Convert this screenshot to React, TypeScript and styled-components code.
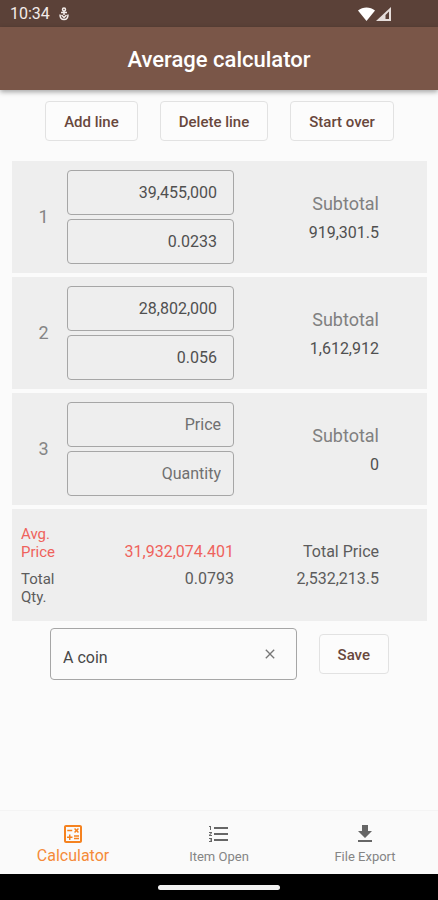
import React, { useState } from "react";
import styled, { createGlobalStyle } from "styled-components";
import { MdClose, MdFileDownload, MdFormatListNumbered, MdOutlineCalculate } from "react-icons/md";

const GlobalStyle = createGlobalStyle`
  *, *::before, *::after { box-sizing: border-box; }
  body { margin: 0; background: #fafafa; }
  body, button, input { font-family: Roboto, "Noto Sans", sans-serif; }
`;

const Page = styled.div`
  min-height: 100vh;
  display: flex;
  flex-direction: column;
  background: #fbfbfb;
  color: #555;
`;

const StatusBar = styled.div`
  height: 27px;
  padding: 0 46px 0 10px;
  display: flex;
  align-items: center;
  background: #5b4138;
  color: #f3ecea;
  font-size: 16px;
  line-height: 28px;
`;

const StatusGlyph = styled.svg`
  margin-left: 8px;
  width: 12px;
  height: 14px;
`;

const SignalGlyphs = styled.svg`
  margin-left: auto;
  width: 34px;
  height: 16px;
`;

const AppBar = styled.header`
  height: 63px;
  display: flex;
  align-items: center;
  justify-content: center;
  background: #7a5648;
  box-shadow: 0 2px 5px rgba(0, 0, 0, 0.35);
`;

const Title = styled.h1`
  margin: 0;
  padding-top: 3px;
  font-size: 22px;
  font-weight: 500;
  line-height: 28px;
  color: #fff;
`;

const Main = styled.main`
  flex: 1;
  padding: 11px 11px 0 12px;
`;

const Toolbar = styled.div`
  display: flex;
  justify-content: center;
  gap: 22px;
  margin-bottom: 20px;
`;

const OutlineButton = styled.button`
  height: 40px;
  padding: 1px 18px 0;
  border: 1px solid #e2e2e2;
  border-radius: 4px;
  background: #fcfcfc;
  color: #69483d;
  font-size: 15px;
  font-weight: 500;
  line-height: 20px;
  white-space: nowrap;
  cursor: pointer;
`;

const Lines = styled.div`
  display: grid;
  gap: 4px;
`;

const LineCard = styled.section`
  min-height: 112px;
  display: grid;
  grid-template-columns: 55px minmax(0, 167fr) minmax(0, 193fr);
  align-items: center;
  background: #eee;
`;

const LineNumber = styled.span`
  padding-left: 8px;
  text-align: center;
  font-size: 18px;
  line-height: 20px;
  color: #858585;
`;

const Fields = styled.div`
  display: grid;
  gap: 4px;
`;

const NumberField = styled.input`
  width: 100%;
  height: 45px;
  padding: 0 16px;
  border: 1px solid #a6a6a6;
  border-radius: 4px;
  background: transparent;
  color: #505050;
  font-size: 16px;
  text-align: right;
  &:placeholder-shown { padding-right: 12px; }
  &::placeholder { color: #707070; opacity: 1; }
`;

const Subtotal = styled.div`
  padding: 2px 48px 0 0;
  display: grid;
  gap: 8px;
  justify-items: end;
  color: #505050;
  font-size: 16px;
  line-height: 20px;
`;

const SubtotalLabel = styled.span`
  color: #808080;
  font-size: 18px;
  line-height: 22px;
`;

const SummaryCard = styled.section`
  min-height: 112px;
  padding: 0 0 0 9px;
  display: grid;
  grid-template-columns: 46px minmax(0, 167fr) minmax(0, 193fr);
  align-content: center;
  row-gap: 9px;
  background: #eee;
  color: #5c5c5c;
  font-size: 16px;
  line-height: 18px;
`;

const SummaryCell = styled.span<{ $accent?: boolean; $low?: boolean; $kind?: "label" | "total" }>`
  align-self: ${(p) => (p.$low ? "end" : "start")};
  text-align: ${(p) => (p.$kind === "label" ? "left" : "right")};
  padding-right: ${(p) => (p.$kind === "total" ? "48px" : "0")};
  color: ${(p) => (p.$accent ? "#ef625c" : "inherit")};
  font-size: ${(p) => (p.$kind === "label" ? "15px" : "16px")};
`;

const SaveRow = styled.form`
  margin: 7px 38px 0;
  display: flex;
  align-items: center;
  gap: 22px;
`;

const NameBox = styled.div`
  flex: 1;
  min-width: 0;
  height: 52px;
  display: flex;
  align-items: center;
  border: 1px solid #a6a6a6;
  border-radius: 4px;
`;

const NameField = styled.input`
  flex: 1;
  min-width: 0;
  height: 100%;
  padding: 6px 0 0 12px;
  border: 0;
  background: transparent;
  color: #484848;
  font-size: 16px;
`;

const ClearButton = styled.button`
  width: 52px;
  height: 40px;
  padding: 0;
  display: grid;
  place-items: center;
  border: 0;
  background: transparent;
  color: #777;
  font-size: 16px;
  cursor: pointer;
`;

const BottomNav = styled.nav`
  height: 64px;
  display: grid;
  grid-template-columns: repeat(3, 1fr);
  background: #fafafa;
  border-top: 1px solid #f4f4f4;
`;

const NavLink = styled.a<{ $active?: boolean }>`
  padding-top: 11px;
  display: flex;
  flex-direction: column;
  align-items: center;
  text-decoration: none;
  color: ${(p) => (p.$active ? "#f58b39" : "#858585")};
  font-size: ${(p) => (p.$active ? "16px" : "13px")};
  line-height: ${(p) => (p.$active ? "20px" : "22px")};
  svg {
    width: 26px;
    height: 24px;
    color: ${(p) => (p.$active ? "#f5821f" : "#666")};
  }
`;

const SystemBar = styled.div`
  height: 26px;
  display: grid;
  place-items: center;
  background: #000;
`;

const HomeHandle = styled.div`
  width: 28%;
  height: 5px;
  border-radius: 3px;
  background: #f2f2f2;
`;

type Line = { price: string; quantity: string };

const initialLines: Line[] = [
  { price: "39,455,000", quantity: "0.0233" },
  { price: "28,802,000", quantity: "0.056" },
  { price: "", quantity: "" },
];

const parse = (text: string) => Number(text.replace(/,/g, "")) || 0;
const format = (value: number, digits = 4) =>
  value.toLocaleString("en-US", { maximumFractionDigits: digits });

export default function App() {
  const [lines, setLines] = useState<Line[]>(initialLines);
  const [name, setName] = useState("A coin");

  const update = (index: number, patch: Partial<Line>) =>
    setLines((all) => all.map((line, i) => (i === index ? { ...line, ...patch } : line)));

  const totalQuantity = lines.reduce((sum, l) => sum + parse(l.quantity), 0);
  const totalPrice = lines.reduce((sum, l) => sum + parse(l.price) * parse(l.quantity), 0);
  const average = totalQuantity ? totalPrice / totalQuantity : 0;

  return (
    <>
      <GlobalStyle />
      <Page>
        <StatusBar>
          <span>10:34</span>
          <StatusGlyph viewBox="0 0 12 14" fill="none" stroke="currentColor" strokeWidth="1.5" aria-hidden="true">
            <circle cx="6" cy="2.500" r="1.500" />
            <path d="M6 4v4M3 5.500h6M2 7.500c0 3 1.500 5 4 5s4-2 4-5M3.500 8 6 10.500 8.500 8" />
          </StatusGlyph>
          <SignalGlyphs viewBox="0 0 34 16" aria-hidden="true">
            <path d="M0 4.500C4.800.400 12.200.400 17 4.500L8.500 15z" fill="#fff" />
            <path d="M18 15 33 1v14z" fill="#e6dedb" />
            <path d="M27.500 9 31 5.500V13h-3.500z" fill="#5b4138" />
          </SignalGlyphs>
        </StatusBar>
        <AppBar>
          <Title>Average calculator</Title>
        </AppBar>
        <Main>
          <Toolbar>
            <OutlineButton type="button" onClick={() => setLines([...lines, { price: "", quantity: "" }])}>
              Add line
            </OutlineButton>
            <OutlineButton type="button" onClick={() => setLines(lines.slice(0, -1))}>
              Delete line
            </OutlineButton>
            <OutlineButton type="button" onClick={() => setLines([{ price: "", quantity: "" }])}>
              Start over
            </OutlineButton>
          </Toolbar>
          <Lines>
            {lines.map((line, i) => (
              <LineCard key={i}>
                <LineNumber>{i + 1}</LineNumber>
                <Fields>
                  <NumberField
                    aria-label={`Price ${i + 1}`}
                    inputMode="decimal"
                    placeholder="Price"
                    value={line.price}
                    onChange={(e) => update(i, { price: e.target.value })}
                  />
                  <NumberField
                    aria-label={`Quantity ${i + 1}`}
                    inputMode="decimal"
                    placeholder="Quantity"
                    value={line.quantity}
                    onChange={(e) => update(i, { quantity: e.target.value })}
                  />
                </Fields>
                <Subtotal>
                  <SubtotalLabel>Subtotal</SubtotalLabel>
                  <span>{format(parse(line.price) * parse(line.quantity))}</span>
                </Subtotal>
              </LineCard>
            ))}
            <SummaryCard>
              <SummaryCell $kind="label" $accent>Avg. Price</SummaryCell>
              <SummaryCell $accent $low>{format(average, 3)}</SummaryCell>
              <SummaryCell $kind="total" $low>Total Price</SummaryCell>
              <SummaryCell $kind="label">Total Qty.</SummaryCell>
              <SummaryCell>{format(totalQuantity)}</SummaryCell>
              <SummaryCell $kind="total">{format(totalPrice)}</SummaryCell>
            </SummaryCard>
          </Lines>
          <SaveRow onSubmit={(e) => e.preventDefault()}>
            <NameBox>
              <NameField aria-label="Item name" value={name} onChange={(e) => setName(e.target.value)} />
              <ClearButton type="button" aria-label="Clear name" onClick={() => setName("")}>
                <MdClose />
              </ClearButton>
            </NameBox>
            <OutlineButton type="submit">Save</OutlineButton>
          </SaveRow>
        </Main>
        <BottomNav>
          <NavLink href="#calculator" $active aria-current="page">
            <MdOutlineCalculate />
            Calculator
          </NavLink>
          <NavLink href="#items">
            <MdFormatListNumbered />
            Item Open
          </NavLink>
          <NavLink href="#export">
            <MdFileDownload />
            File Export
          </NavLink>
        </BottomNav>
        <SystemBar>
          <HomeHandle />
        </SystemBar>
      </Page>
    </>
  );
}
